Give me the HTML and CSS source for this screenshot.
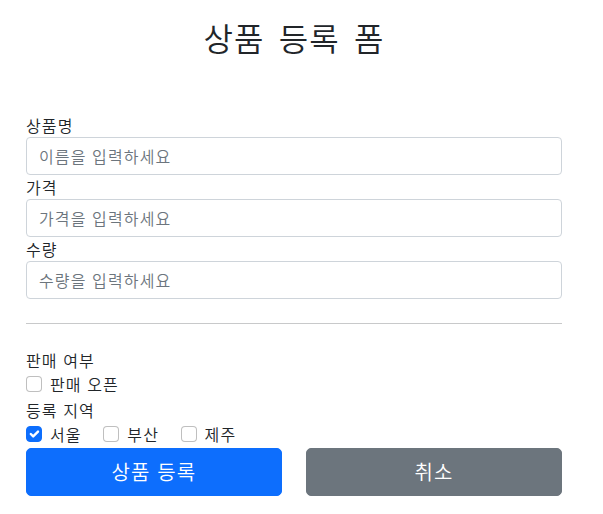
FILE: index.html
```html
<!DOCTYPE html>
<html lang="ko">
<head>
    <meta charset="UTF-8">
    <title>상품 등록 폼</title>
    <link rel="stylesheet" href="styles.css">
</head>
<body>
    <div class="container">
        <div class="page-header">
            <h2>상품 등록 폼</h2>
        </div>

        <form>
            <div>
                <label for="itemName">상품명</label>
                <input type="text" id="itemName" class="form-control" placeholder="이름을 입력하세요">
            </div>
            <div>
                <label for="price">가격</label>
                <input type="text" id="price" class="form-control" placeholder="가격을 입력하세요">
            </div>
            <div>
                <label for="quantity">수량</label>
                <input type="text" id="quantity" class="form-control" placeholder="수량을 입력하세요">
            </div>

            <hr>

            <!-- single checkbox -->
            <div>판매 여부</div>
            <div class="form-check">
                <span class="check-box"></span>
                <label class="check-label">판매 오픈</label>
            </div>

            <!-- multi checkbox -->
            <div>
                <div>등록 지역</div>
                <div class="form-check inline">
                    <span class="check-box checked">
                        <svg viewBox="0 0 20 20" width="16" height="16"><path d="m6 10 3 3 6-6" fill="none" stroke="#fff" stroke-width="3" stroke-linecap="round" stroke-linejoin="round"/></svg>
                    </span>
                    <label class="check-label">서울</label>
                </div>
                <div class="form-check inline">
                    <span class="check-box"></span>
                    <label class="check-label">부산</label>
                </div>
                <div class="form-check inline">
                    <span class="check-box"></span>
                    <label class="check-label">제주</label>
                </div>
            </div>

            <div class="row">
                <button class="btn btn-primary" type="submit">상품 등록</button>
                <button class="btn btn-secondary" type="button">취소</button>
            </div>
        </form>
    </div>
</body>
</html>
```

FILE: styles.css
```css
* {
    box-sizing: border-box;
}
body {
    margin: 0;
    padding-right: 15px;
    font-family: "Noto Sans CJK KR", "Noto Sans", sans-serif;
    font-size: 16px;
    font-weight: 350;
    line-height: 1.5;
    letter-spacing: 0.07em;
    color: #212529;
    background: #fff;
}
.container {
    max-width: 560px;
    margin: 0 auto;
    padding: 0 12px;
}
.page-header {
    padding: 18px 0 57px;
    text-align: center;
}
.page-header h2 {
    margin: 0;
    font-size: 32px;
    font-weight: 350;
    line-height: 38px;
    word-spacing: 4px;
}
label {
    display: inline-block;
}
.form-control {
    display: block;
    width: 100%;
    height: 38px;
    padding: 6px 12px;
    font-family: inherit;
    font-size: 16px;
    font-weight: inherit;
    letter-spacing: inherit;
    line-height: 1.5;
    color: #212529;
    border: 1px solid #ced4da;
    border-radius: 4px;
    outline: none;
}
.form-control::placeholder {
    color: #6c757d;
}
hr {
    margin: 24px 0;
    border: 0;
    border-top: 1px solid #c8c9ca;
}
.form-check {
    display: block;
    min-height: 24px;
    padding-left: 24px;
    margin-bottom: 2px;
}
.form-check.inline {
    display: inline-block;
    margin-right: 16px;
}
.check-box {
    float: left;
    width: 16px;
    height: 16px;
    margin-left: -24px;
    margin-top: 4px;
    border: 1px solid rgba(0, 0, 0, 0.25);
    border-radius: 4px;
    background: #fff;
}
.check-box svg {
    display: block;
    margin: -1px;
}
.check-box.checked {
    background: #0d6efd;
    border-color: #0d6efd;
}
.row {
    display: grid;
    grid-template-columns: 1fr 1fr;
    column-gap: 24px;
}
.btn {
    height: 48px;
    padding: 8px 16px;
    font-family: inherit;
    font-size: 20px;
    font-weight: inherit;
    letter-spacing: inherit;
    line-height: 1.5;
    color: #fff;
    border: 1px solid transparent;
    border-radius: 5px;
    cursor: pointer;
}
.btn-primary {
    background-color: #0d6efd;
    border-color: #0d6efd;
}
.btn-secondary {
    background-color: #6c757d;
    border-color: #6c757d;
}
```
